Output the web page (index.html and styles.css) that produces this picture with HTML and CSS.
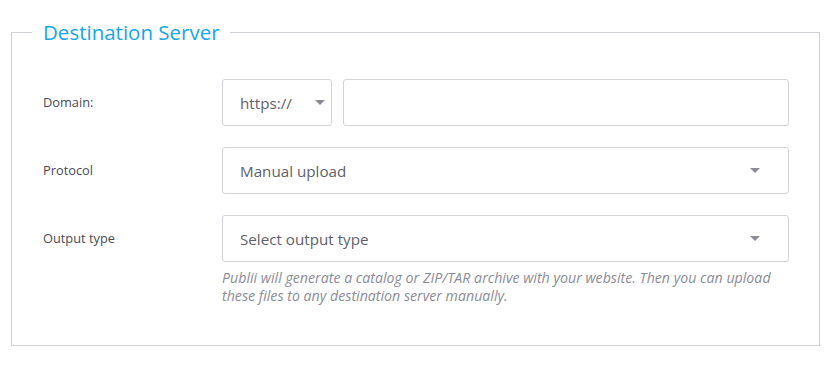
FILE: index.html
```html
<!DOCTYPE html>
<html>
<head>
<meta charset="utf-8">
<link rel="stylesheet" href="styles.css">
</head>
<body>
<fieldset class="box">
  <legend class="box-title">Destination Server</legend>
  <div class="form">
    <label class="label">Domain:</label>
    <div class="field field-domain">
      <div class="select select-small"><span>https://</span><svg class="arrow" width="10" height="5" viewBox="0 0 10 5"><path d="M0 0H10L5 5Z"/></svg></div>
      <div class="input"></div>
    </div>
    <label class="label">Protocol</label>
    <div class="field">
      <div class="select"><span>Manual upload</span><svg class="arrow" width="10" height="5" viewBox="0 0 10 5"><path d="M0 0H10L5 5Z"/></svg></div>
    </div>
    <label class="label">Output type</label>
    <div class="field">
      <div class="select"><span>Select output type</span><svg class="arrow" width="10" height="5" viewBox="0 0 10 5"><path d="M0 0H10L5 5Z"/></svg></div>
      <p class="note">Publii will generate a catalog or ZIP/TAR archive with your website. Then you can upload these files to any destination server manually.</p>
    </div>
  </div>
</fieldset>
</body>
</html>
```
FILE: styles.css
```css
html, body {
  margin: 0;
  padding: 0;
  background: #fff;
}
body {
  padding-top: 18px;
  font-family: "Open Sans", "Noto Sans", sans-serif;
  color: #444450;
}
.box {
  margin: 0 12px 0 11px;
  padding: 33px 30px 40px 31px;
  border: 1px solid #cfd0d8;
  min-width: 0;
}
.box-title {
  margin-left: -11px;
  padding: 0 10px 0 11px;
  font-size: 20.5px;
  line-height: 28px;
  color: #17a6e8;
  font-weight: 400;
}
.form {
  display: grid;
  grid-template-columns: 179px 1fr;
  row-gap: 21px;
  align-items: start;
}
.label {
  font-size: 12.8px;
  line-height: 47px;
  height: 47px;
  color: #4a4a55;
}
.field {
  display: flex;
  flex-direction: column;
}
.field-domain {
  flex-direction: row;
  gap: 11px;
}
.select, .input {
  box-sizing: border-box;
  height: 47px;
  border: 1px solid #d3d4da;
  border-radius: 3px;
  background: #fff;
}
.select {
  display: flex;
  align-items: center;
  justify-content: space-between;
  padding: 0 28px 0 17px;
  font-size: 15.2px;
  color: #5f5f6b;
}
.select-small {
  width: 110px;
  flex: none;
  padding-right: 6px;
}
.input {
  flex: 1;
}
.arrow {
  fill: #8a8b96;
  flex: none;
}
.note {
  margin: 7px 0 0;
  max-width: 556px;
  font-size: 14.2px;
  line-height: 18px;
  font-style: italic;
  color: #8c8c98;
}
```
